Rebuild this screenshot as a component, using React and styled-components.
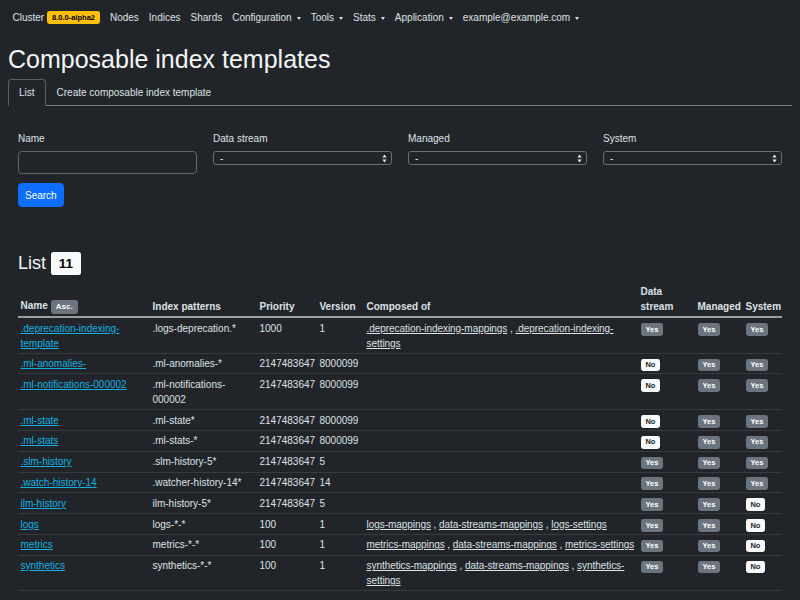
import React from "react";
import styled, { createGlobalStyle, css } from "styled-components";

const GlobalStyle = createGlobalStyle`
  html, body { margin: 0; padding: 0; background: #212529; }
  body {
    color: #dee2e6;
    font-family: "Liberation Sans", Arial, sans-serif;
    font-size: 10px;
    line-height: 15px;
    overflow: hidden;
  }
  * { box-sizing: border-box; }
`;

const Navbar = styled.nav`
  display: flex;
  align-items: center;
  padding: 5px 7.5px;
  height: 35px;
`;

const NavItem = styled.a`
  display: inline-flex;
  align-items: center;
  padding: 5px 5px;
  color: #dee2e6;
  text-decoration: none;
  white-space: nowrap;
  ${(p) =>
    p.$dropdown &&
    css`
      &::after {
        content: "";
        display: inline-block;
        margin-left: 5px;
        border-top: 3px solid #dee2e6;
        border-left: 2.7px solid transparent;
        border-right: 2.7px solid transparent;
        margin-top: 1px;
      }
    `}
`;

const Badge = styled.span`
  display: inline-block;
  font-size: ${(p) => p.$fs || 7.5}px;
  font-weight: 700;
  line-height: 1;
  padding: ${(p) => (p.$fs ? "3px 5px" : "2.6px 4.9px")};
  border-radius: 2.4px;
  white-space: nowrap;
  background: ${(p) => p.$bg || "#6c757d"};
  color: ${(p) => p.$fg || "#fff"};
  margin-left: ${(p) => p.$ml || 0}px;
`;

const Main = styled.main`
  padding: 0 8px;
`;

const Title = styled.h1`
  margin: 9px 0 5px;
  font-size: 25px;
  line-height: 30px;
  font-weight: 500;
  color: #f3f4f5;
`;

const Tabs = styled.div`
  display: flex;
  border-bottom: 1px solid #7d8185;
`;

const Tab = styled.a`
  padding: 5px 10px;
  margin-bottom: -1px;
  border: 1px solid transparent;
  border-top-left-radius: 3.75px;
  border-top-right-radius: 3.75px;
  color: #dee2e6;
  ${(p) =>
    p.$active &&
    css`
      border-color: #5b6065 #5b6065 #212529;
      background: #212529;
    `}
`;

const Panel = styled.section`
  padding: 25px 10px 0;
`;

const FilterGrid = styled.div`
  display: grid;
  grid-template-columns: repeat(4, 1fr);
  gap: 16px;
  align-items: start;
`;

const Field = styled.div`
  display: flex;
  flex-direction: column;
`;

const Label = styled.label`
  margin-bottom: 5px;
  color: #dee2e6;
`;

const TextInput = styled.div`
  height: 23px;
  border: 1px solid #62676c;
  border-radius: 3.75px;
  background: #212529;
`;

const Select = styled.div`
  height: 14px;
  display: flex;
  align-items: center;
  justify-content: space-between;
  padding: 0 4px 0 6px;
  border: 1px solid #6a6f74;
  border-radius: 3px;
  background: #212529;
  font-size: 10px;
  color: #e9ecef;
  svg { display: block; }
`;

const Button = styled.button`
  align-self: flex-start;
  margin-top: 9px;
  height: 24px;
  padding: 0 6px;
  border: 1px solid #0d6efd;
  border-radius: 3.75px;
  background: #0d6efd;
  color: #fff;
  font-family: inherit;
  font-size: 10px;
  line-height: 15px;
`;

const ListHeading = styled.h3`
  display: flex;
  align-items: center;
  gap: 5px;
  margin: 45px 0 6px;
  font-size: 18px;
  line-height: 23px;
  font-weight: 500;
  color: #f3f4f5;
`;

const CountBadge = styled.span`
  display: inline-block;
  background: #f8f9fa;
  color: #000;
  font-size: 13.5px;
  font-weight: 700;
  line-height: 1;
  padding: 4.7px 7.8px;
  border-radius: 2.5px;
`;

const Table = styled.table`
  width: 100%;
  table-layout: fixed;
  border-collapse: collapse;
  color: #dee2e6;
`;

const Th = styled.th`
  text-align: left;
  vertical-align: bottom;
  padding: 2.5px;
  font-weight: 700;
  border-bottom: 2px solid #9a9ea2;
  width: ${(p) => p.$w}px;
`;

const Td = styled.td`
  vertical-align: top;
  padding: 2.5px 2.5px 2.2px;
  border-bottom: 1px solid #373b40;
  ${(p) =>
    p.$tight &&
    css`
      letter-spacing: -0.05px;
    `}
`;

const NameLink = styled.a`
  color: #17b0e0;
  text-decoration: underline;
`;

const ComposedLink = styled.a`
  color: #dee2e6;
  text-decoration: underline;
`;

const YesNo = ({ v }) =>
  v ? (
    <Badge $bg="#6c757d" $fg="#fff">Yes</Badge>
  ) : (
    <Badge $bg="#f8f9fa" $fg="#212529">No</Badge>
  );

const SelectArrows = () => (
  <svg width="5" height="9" viewBox="0 0 5 9">
    <path d="M2.5 0.5 L4.6 3.4 L0.4 3.4 Z" fill="#e9ecef" />
    <path d="M2.5 8.5 L4.6 5.6 L0.4 5.6 Z" fill="#e9ecef" />
  </svg>
);

const rows = [
  { name: ".deprecation-indexing-template", pattern: ".logs-deprecation.*", priority: "1000", version: "1", composed: [".deprecation-indexing-mappings", ".deprecation-indexing-settings"], ds: true, managed: true, system: true },
  { name: ".ml-anomalies-", pattern: ".ml-anomalies-*", priority: "2147483647", version: "8000099", composed: [], ds: false, managed: true, system: true },
  { name: ".ml-notifications-000002", pattern: ".ml-notifications-000002", priority: "2147483647", version: "8000099", composed: [], ds: false, managed: true, system: true },
  { name: ".ml-state", pattern: ".ml-state*", priority: "2147483647", version: "8000099", composed: [], ds: false, managed: true, system: true },
  { name: ".ml-stats", pattern: ".ml-stats-*", priority: "2147483647", version: "8000099", composed: [], ds: false, managed: true, system: true },
  { name: ".slm-history", pattern: ".slm-history-5*", priority: "2147483647", version: "5", composed: [], ds: true, managed: true, system: true },
  { name: ".watch-history-14", pattern: ".watcher-history-14*", priority: "2147483647", version: "14", composed: [], ds: true, managed: true, system: true },
  { name: "ilm-history", pattern: "ilm-history-5*", priority: "2147483647", version: "5", composed: [], ds: true, managed: true, system: false },
  { name: "logs", pattern: "logs-*-*", priority: "100", version: "1", composed: ["logs-mappings", "data-streams-mappings", "logs-settings"], ds: true, managed: true, system: false },
  { name: "metrics", pattern: "metrics-*-*", priority: "100", version: "1", composed: ["metrics-mappings", "data-streams-mappings", "metrics-settings"], ds: true, managed: true, system: false },
  { name: "synthetics", pattern: "synthetics-*-*", priority: "100", version: "1", composed: ["synthetics-mappings", "data-streams-mappings", "synthetics-settings"], ds: true, managed: true, system: false },
];

const filters = ["Data stream", "Managed", "System"];

export default function App() {
  return (
    <>
      <GlobalStyle />
      <Navbar>
        <NavItem>
          Cluster<Badge $bg="#ffc107" $fg="#000" $ml={3}>8.0.0-alpha2</Badge>
        </NavItem>
        <NavItem>Nodes</NavItem>
        <NavItem>Indices</NavItem>
        <NavItem>Shards</NavItem>
        <NavItem $dropdown>Configuration</NavItem>
        <NavItem $dropdown>Tools</NavItem>
        <NavItem $dropdown>Stats</NavItem>
        <NavItem $dropdown>Application</NavItem>
        <NavItem $dropdown>example@example.com</NavItem>
      </Navbar>
      <Main>
        <Title>Composable index templates</Title>
        <Tabs>
          <Tab $active>List</Tab>
          <Tab>Create composable index template</Tab>
        </Tabs>
        <Panel>
          <FilterGrid>
            <Field>
              <Label>Name</Label>
              <TextInput />
            </Field>
            {filters.map((f) => (
              <Field key={f}>
                <Label>{f}</Label>
                <Select>
                  <span>-</span>
                  <SelectArrows />
                </Select>
              </Field>
            ))}
          </FilterGrid>
          <Button>Search</Button>
          <ListHeading>
            List <CountBadge>11</CountBadge>
          </ListHeading>
          <Table>
            <thead>
              <tr>
                <Th $w={132}>
                  Name<Badge $ml={3} $fs={8}>Asc.</Badge>
                </Th>
                <Th $w={107}>Index patterns</Th>
                <Th $w={60}>Priority</Th>
                <Th $w={47}>Version</Th>
                <Th $w={274}>Composed of</Th>
                <Th $w={57}>Data stream</Th>
                <Th $w={48}>Managed</Th>
                <Th $w={39}>System</Th>
              </tr>
            </thead>
            <tbody>
              {rows.map((r) => (
                <tr key={r.name}>
                  <Td>
                    <NameLink>{r.name}</NameLink>
                  </Td>
                  <Td>{r.pattern}</Td>
                  <Td>{r.priority}</Td>
                  <Td>{r.version}</Td>
                  <Td $tight>
                    {r.composed.map((c, i) => (
                      <React.Fragment key={c}>
                        {i > 0 && " , "}
                        <ComposedLink>{c}</ComposedLink>
                      </React.Fragment>
                    ))}
                  </Td>
                  <Td><YesNo v={r.ds} /></Td>
                  <Td><YesNo v={r.managed} /></Td>
                  <Td><YesNo v={r.system} /></Td>
                </tr>
              ))}
            </tbody>
          </Table>
        </Panel>
      </Main>
    </>
  );
}
